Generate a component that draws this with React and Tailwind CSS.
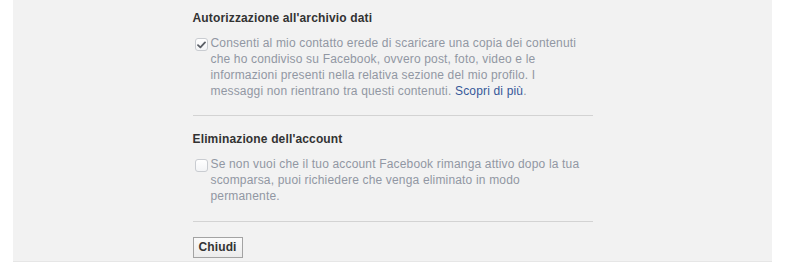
function Checkbox({ checked }) {
  return (
    <span className="mt-[3px] ml-[2px] mr-[3px] flex h-[13px] w-[13px] shrink-0 items-center justify-center rounded-[3px] border border-[#c9ccd1] bg-gradient-to-b from-white to-[#f3f4f6]">
      {checked && (
        <svg width="9" height="8" viewBox="0 0 9 8">
          <path d="M1 4.2 L3.4 6.4 L8 1.4" fill="none" stroke="#5b5f66" strokeWidth="1.8" strokeLinecap="round" strokeLinejoin="round" />
        </svg>
      )}
    </span>
  )
}

function Section({ title, checked, children, className }) {
  return (
    <div className={"border-b border-[#d3d3d3] " + className}>
      <div className="h-4 text-[12px] font-bold leading-4 tracking-[0.15px] text-[#333]">{title}</div>
      <div className="mt-[9px] flex">
        <Checkbox checked={checked} />
        <p className="w-[374px] text-[12px] leading-4 tracking-[0.17px] text-[#9197a3]">{children}</p>
      </div>
    </div>
  )
}

export default function App() {
  return (
    <div className="h-[268px] bg-white font-['Liberation_Sans',Arial,sans-serif]">
      <div className="ml-[13px] h-[262px] w-[759px] border-b border-[#e6e6e6] bg-[#f2f2f2]">
        <div className="mx-auto w-[400px] pt-[10px]">
          <Section title="Autorizzazione all'archivio dati" checked className="pb-4">
            Consenti al mio contatto erede di scaricare una copia dei contenuti che ho condiviso su Facebook, ovvero post, foto, video e le informazioni presenti nella relativa sezione del mio profilo. I messaggi non rientrano tra questi contenuti.{' '}
            <a href="#" className="text-[#365899]">Scopri di più</a>.
          </Section>
          <Section title="Eliminazione dell'account" className="pt-[15px] pb-[17px]">
            Se non vuoi che il tuo account Facebook rimanga attivo dopo la tua scomparsa, puoi richiedere che venga eliminato in modo permanente.
          </Section>
          <div className="pt-3">
            <button className="h-[21px] w-[50px] border border-[#a3a3a3] bg-gradient-to-b from-[#fafafa] to-[#ececec] text-[12px] font-bold leading-4 tracking-[0.15px] text-[#333]">
              Chiudi
            </button>
          </div>
        </div>
      </div>
    </div>
  )
}
